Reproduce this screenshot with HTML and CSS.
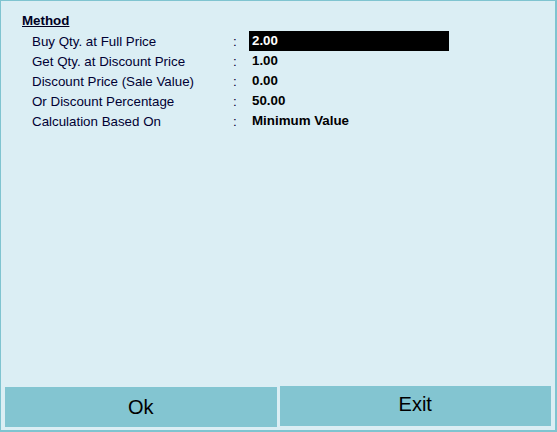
FILE: index.html
```html
<!DOCTYPE html>
<html>
<head>
<meta charset="utf-8">
<link rel="stylesheet" href="styles.css">
</head>
<body>
<div class="window">
  <div class="content">
    <div class="heading">Method</div>
    <div class="rows">
      <div class="row"><span class="label">Buy Qty. at Full Price</span><span class="colon">:</span><span class="value field">2.00</span></div>
      <div class="row"><span class="label">Get Qty. at Discount Price</span><span class="colon">:</span><span class="value">1.00</span></div>
      <div class="row"><span class="label">Discount Price (Sale Value)</span><span class="colon">:</span><span class="value">0.00</span></div>
      <div class="row"><span class="label">Or Discount Percentage</span><span class="colon">:</span><span class="value">50.00</span></div>
      <div class="row"><span class="label">Calculation Based On</span><span class="colon">:</span><span class="value">Minimum Value</span></div>
    </div>
  </div>
  <div class="buttons">
    <div class="btn btn-ok">Ok</div>
    <div class="btn btn-exit">Exit</div>
  </div>
</div>
</body>
</html>
```
FILE: styles.css
```css
html, body {
  margin: 0;
  padding: 0;
}
body {
  width: 557px;
  height: 432px;
  overflow: hidden;
  font-family: "Liberation Sans", Arial, sans-serif;
}
.window {
  box-sizing: border-box;
  width: 557px;
  height: 432px;
  background: #dbeef4;
  border: 1px solid #7fc4d0;
  border-right-width: 2px;
  border-bottom-width: 2px;
  display: flex;
  flex-direction: column;
}
.content {
  flex: 1;
  padding: 12px 0 0 21px;
}
.heading {
  font-size: 13.33px;
  font-weight: bold;
  color: #000022;
  text-decoration: underline;
  line-height: 16px;
}
.rows {
  padding-left: 10px;
  padding-top: 2px;
}
.row {
  display: flex;
  align-items: center;
  height: 20px;
  font-size: 13.33px;
}
.label {
  width: 201px;
  color: #000033;
}
.colon {
  width: 16px;
  color: #000033;
}
.value {
  font-weight: bold;
  color: #000000;
  padding-left: 3px;
  line-height: 20px;
}
.field {
  width: 197px;
  background: #000000;
  color: #ffffff;
}
.buttons {
  display: flex;
  gap: 3px;
  padding: 0 4px 3px 4px;
  height: 45px;
  box-sizing: border-box;
}
.btn {
  flex: 1;
  background: #83c5d1;
  color: #000000;
  font-size: 20px;
  display: flex;
  align-items: center;
  justify-content: center;
  height: 40px;
}
.btn-ok {
  margin-top: 2px;
}
.btn-exit {
  margin-top: 1px;
  padding-bottom: 3px;
  box-sizing: border-box;
}
```
